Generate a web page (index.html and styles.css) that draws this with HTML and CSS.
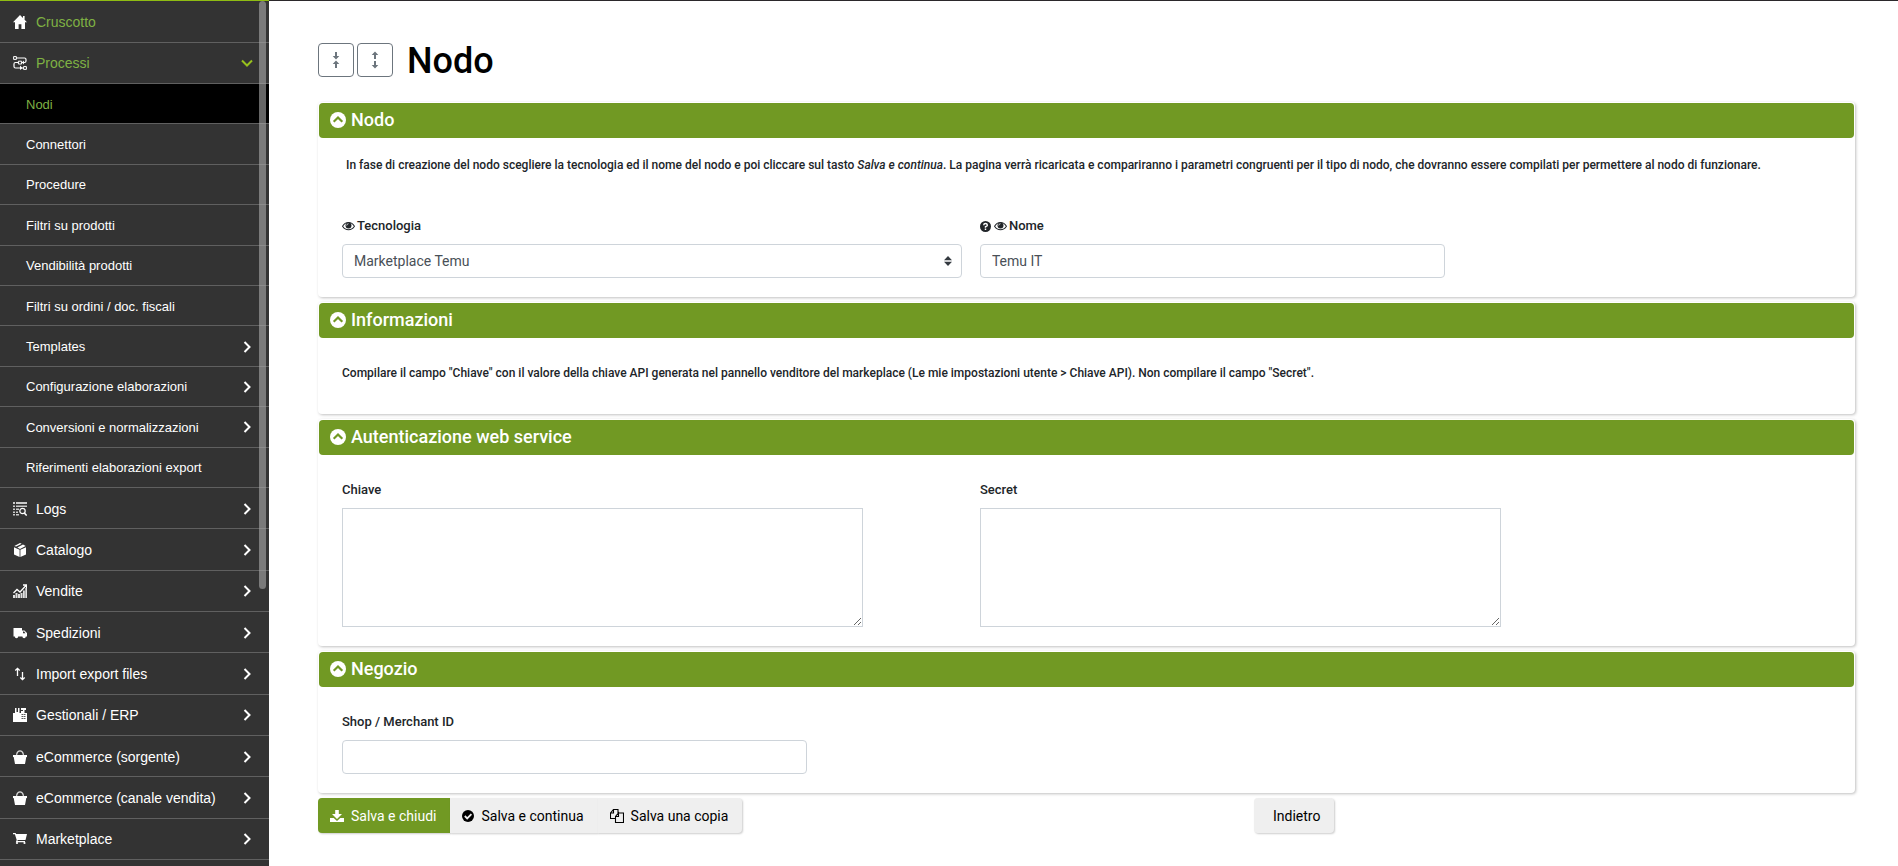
FILE: index.html
```html
<!doctype html>
<html lang="it">
  <head>
    <meta charset="UTF-8" />
    <meta name="viewport" content="width=device-width, initial-scale=1.0" />
    <title>Nodo</title>
    <link rel="stylesheet" href="styles.css">
  </head>
  <body>
    <svg class="sprite" aria-hidden="true">
      <symbol id="chevron" viewBox="0 0 12 12">
        <path d="M3.500 1 8.500 6l-5 5" fill="none" stroke="currentColor" stroke-width="2" />
      </symbol>
      <symbol id="home" viewBox="0 0 14 14">
        <path d="M7 0 0 7.200h2V14h3.600V9.200h2.800V14H12V7.200h2L11.600 4.700V1H10v2z" />
      </symbol>
      <symbol id="flow" viewBox="0 0 14 14">
        <path d="M3 2h8.500q1.500 0 1.500 1.500v1.500q0 1.500-1.500 1.500H2.500Q1 6.500 1 8v2.500Q1 12 2.500 12H11" fill="none" stroke="currentColor" stroke-width="1.200" />
        <path d="M.6.600h2.800v2.800H.6zM5.400 5.200h3.200V8H5.400zM10.600 10.600h2.800v2.800h-2.800z" fill="#333" stroke="currentColor" />
        <path d="M7 9.500 9.500 12 7 14zM11 4.500 9 6.500l2 2z" />
      </symbol>
      <symbol id="logs" viewBox="0 0 14 14">
        <path d="M0 0h2v2H0zM3 0h11v2H3zM0 3.500h2V5H0zM3 3.500h11V5H3zM0 6.500h2V8H0zM3 6.500h3V8H3zM0 9.500h2V11H0zM3 9.500h2V11H3zM0 12h2v1.500H0zM3 12h3v1.500H3z" opacity=".75" />
        <circle cx="9.500" cy="9" r="2.700" fill="none" stroke="currentColor" stroke-width="1.200" />
        <path d="m11.300 11 2.400 2.600" stroke="currentColor" stroke-width="1.500" />
      </symbol>
      <symbol id="box" viewBox="0 0 14 14">
        <path d="M1 4.300 6.600 6.800V14L1 11.400zM13 4.300 7.400 6.800V14L13 11.400zM7 0l1.700.800-5.500 2.700L1.300 3zM10 1.400l2.700 1.500L7 5.900 4.300 4.400z" />
      </symbol>
      <symbol id="sales" viewBox="0 0 14 14">
        <path d="M0 11h2v3H0zM2.500 9h2v5h-2zM5 10h2v4H5zM7.500 9h2v5h-2zM10 6.500h1.800V14H10zM12.300 4H14v10h-1.700z" opacity=".85" />
        <path d="m.5 9 3.500-3.500 3 2.500 6-6.500M10 1h3.500v3" fill="none" stroke="currentColor" stroke-width="1.300" />
      </symbol>
      <symbol id="truck" viewBox="0 0 14 14">
        <path d="M.5 2H9v2.500h2.500L14 7v3.500h-1.200a1.700 1.700 0 0 1-3.400 0H5.200a1.700 1.700 0 0 1-3.400 0H.5z" />
        <path d="M10 5.500h1.200l1.300 1.700H10z" fill="#333" />
      </symbol>
      <symbol id="updown" viewBox="0 0 14 14">
        <path d="M4.500 9V1.500M2.300 3.500l2.200-2.200 2.200 2.200M9.500 5v7.500M7.300 10.500l2.200 2.200 2.200-2.200" fill="none" stroke="currentColor" stroke-width="1.300" />
      </symbol>
      <symbol id="erp" viewBox="0 0 14 14">
        <path d="M0 5h2V0h1.500v4H5V0h1.500v5H8V3h2V2H8V0h5v2h-1.500v3H14v9H0z" />
        <path d="M8.500 6.500H13M8.500 8.500H13M8.500 10.500H13" stroke="#333" stroke-width=".8" stroke-dasharray="1.500 .5" />
      </symbol>
      <symbol id="bag" viewBox="0 0 14 14">
        <path d="M0 5h14v2h-.7L12 14H2L.7 7H0z" />
        <path d="M3.700 6V4Q4.500.800 7 .800T10.300 4v2" fill="none" stroke="currentColor" stroke-width="1.200" opacity=".8" />
      </symbol>
      <symbol id="cart" viewBox="0 0 14 14">
        <path d="M0 1h2.600l.5 1H14l-1.500 6H4.800l-.4 1H12v1.200H2.800L3.700 8 1.900 2.200H0z" />
        <circle cx="4" cy="11" r="1.100" /><circle cx="11.500" cy="11" r="1.100" />
      </symbol>
      <symbol id="eye" viewBox="0 0 14 10">
        <path d="M.6 5.200Q3 1.200 7 1.200t6.400 4Q11 9 7 9T.6 5.200z" fill="none" stroke="currentColor" stroke-width="1.100" />
        <circle cx="7" cy="4.500" r="3.200" />
        <path d="M5 4.500q.2-1.800 2-2" fill="none" stroke="#fff" stroke-width=".8" />
      </symbol>
      <symbol id="help" viewBox="0 0 12 12">
        <circle cx="6" cy="6" r="6" />
        <path d="M4 4.600Q4.200 2.800 6 2.800t2 1.700Q8 5.400 6 6.200v1.100M6 8.200v1.600" fill="none" stroke="#fff" stroke-width="1.600" />
      </symbol>
      <symbol id="circle-up" viewBox="0 0 16 16">
        <circle cx="8" cy="8" r="8" />
        <path d="M3.700 9.800 8 5.500l4.300 4.300" fill="none" stroke="#719923" stroke-width="2.200" />
      </symbol>
      <symbol id="save" viewBox="0 0 14 14">
        <path d="M5.200 1h3.600v4H12L7 10 2 5h3.200zM0 9h3.700L7 12l3.300-3H14v4H0z" />
      </symbol>
      <symbol id="check" viewBox="0 0 12 12">
        <circle cx="6" cy="6" r="6" />
        <path d="m2.800 6 2.400 2.400 4.200-4.200" fill="none" stroke="#efefef" stroke-width="1.800" />
      </symbol>
      <symbol id="copy" viewBox="0 0 14 14">
        <path d="M5.500 9.500h-5v-5.500l3-3.500h4.500v3.500M3.500.500v3.500h-3M8.500 4h5v9.500h-8v-6l3-3.500v3.500h-3" fill="none" stroke="currentColor" stroke-width="1.100" />
      </symbol>
      <symbol id="collapse" viewBox="0 0 8 18">
        <path d="M3 1h2v4h2.300L4 8.500.700 5H3zM3 17h2v-4h2.300L4 9.500.700 13H3z" />
      </symbol>
      <symbol id="expand" viewBox="0 0 8 18">
        <path d="M3 8h2V4h2.300L4 .500.700 4H3zM3 10h2v4h2.300L4 17.500.700 14H3z" />
      </symbol>
      <symbol id="sort" viewBox="0 0 8 10">
        <path d="M4 0l4 4.300H0zM4 10l4-4.300H0z" />
      </symbol>
    </svg>

    <div class="layout">
      <aside class="sidebar">
        <nav>
          <ul class="menu menu-top">
            <li><a class="active" href="#"><svg class="icon"><use href="#home" /></svg>Cruscotto</a></li>
            <li><a class="active" href="#"><svg class="icon"><use href="#flow" /></svg>Processi<svg class="arrow open"><use href="#chevron" /></svg></a></li>
          </ul>
          <ul class="menu submenu">
            <li><a class="current" href="#">Nodi</a></li>
            <li><a href="#">Connettori</a></li>
            <li><a href="#">Procedure</a></li>
            <li><a href="#">Filtri su prodotti</a></li>
            <li><a href="#">Vendibilità prodotti</a></li>
            <li><a href="#">Filtri su ordini / doc. fiscali</a></li>
            <li><a href="#">Templates<svg class="arrow"><use href="#chevron" /></svg></a></li>
            <li><a href="#">Configurazione elaborazioni<svg class="arrow"><use href="#chevron" /></svg></a></li>
            <li><a href="#">Conversioni e normalizzazioni<svg class="arrow"><use href="#chevron" /></svg></a></li>
            <li><a href="#">Riferimenti elaborazioni export</a></li>
          </ul>
          <ul class="menu menu-areas">
            <li><a href="#"><svg class="icon"><use href="#logs" /></svg>Logs<svg class="arrow"><use href="#chevron" /></svg></a></li>
            <li><a href="#"><svg class="icon"><use href="#box" /></svg>Catalogo<svg class="arrow"><use href="#chevron" /></svg></a></li>
            <li><a href="#"><svg class="icon"><use href="#sales" /></svg>Vendite<svg class="arrow"><use href="#chevron" /></svg></a></li>
            <li><a href="#"><svg class="icon"><use href="#truck" /></svg>Spedizioni<svg class="arrow"><use href="#chevron" /></svg></a></li>
            <li><a href="#"><svg class="icon"><use href="#updown" /></svg>Import export files<svg class="arrow"><use href="#chevron" /></svg></a></li>
            <li><a href="#"><svg class="icon"><use href="#erp" /></svg>Gestionali / ERP<svg class="arrow"><use href="#chevron" /></svg></a></li>
            <li><a href="#"><svg class="icon"><use href="#bag" /></svg>eCommerce (sorgente)<svg class="arrow"><use href="#chevron" /></svg></a></li>
            <li><a href="#"><svg class="icon"><use href="#bag" /></svg>eCommerce (canale vendita)<svg class="arrow"><use href="#chevron" /></svg></a></li>
            <li><a href="#"><svg class="icon"><use href="#cart" /></svg>Marketplace<svg class="arrow"><use href="#chevron" /></svg></a></li>
          </ul>
        </nav>
        <div class="scrollbar"></div>
      </aside>

      <main class="content">
        <header class="page-header">
          <button type="button" class="btn-outline" aria-label="Comprimi"><svg><use href="#collapse" /></svg></button>
          <button type="button" class="btn-outline" aria-label="Espandi"><svg><use href="#expand" /></svg></button>
          <h1>Nodo</h1>
        </header>

        <form>
          <section class="card">
            <h2><svg><use href="#circle-up" /></svg>Nodo</h2>
            <div class="card-body">
              <p class="intro">In fase di creazione del nodo scegliere la tecnologia ed il nome del nodo e poi cliccare sul tasto <em>Salva e continua</em>. La pagina verrà ricaricata e compariranno i parametri congruenti per il tipo di nodo, che dovranno essere compilati per permettere al nodo di funzionare.</p>
              <div class="row">
                <div class="field">
                  <label for="tecnologia"><svg class="eye"><use href="#eye" /></svg>Tecnologia</label>
                  <div class="select">
                    <select id="tecnologia"><option>Marketplace Temu</option></select>
                    <svg><use href="#sort" /></svg>
                  </div>
                </div>
                <div class="field">
                  <label for="nome"><svg class="help"><use href="#help" /></svg><svg class="eye"><use href="#eye" /></svg>Nome</label>
                  <input type="text" id="nome" value="Temu IT">
                </div>
              </div>
            </div>
          </section>

          <section class="card">
            <h2><svg><use href="#circle-up" /></svg>Informazioni</h2>
            <div class="card-body">
              <p class="info">Compilare il campo "Chiave" con il valore della chiave API generata nel pannello venditore del markeplace (Le mie impostazioni utente &gt; Chiave API). Non compilare il campo "Secret".</p>
            </div>
          </section>

          <section class="card">
            <h2><svg><use href="#circle-up" /></svg>Autenticazione web service</h2>
            <div class="card-body">
              <div class="row">
                <div class="field">
                  <label for="chiave">Chiave</label>
                  <textarea id="chiave"></textarea>
                </div>
                <div class="field">
                  <label for="secret">Secret</label>
                  <textarea id="secret"></textarea>
                </div>
              </div>
            </div>
          </section>

          <section class="card">
            <h2><svg><use href="#circle-up" /></svg>Negozio</h2>
            <div class="card-body">
              <div class="row">
                <div class="field">
                  <label for="shop">Shop / Merchant ID</label>
                  <input type="text" id="shop">
                </div>
              </div>
            </div>
          </section>

          <div class="actions">
            <div class="btn-group">
              <button type="submit" class="btn btn-primary"><svg><use href="#save" /></svg>Salva e chiudi</button>
              <button type="submit" class="btn"><svg class="small"><use href="#check" /></svg>Salva e continua</button>
              <button type="submit" class="btn"><svg><use href="#copy" /></svg>Salva una copia</button>
            </div>
            <button type="button" class="btn btn-back">Indietro</button>
          </div>
        </form>
      </main>
    </div>
  </body>
</html>
```
FILE: styles.css
```css
* {
  box-sizing: border-box;
  margin: 0;
  padding: 0;
}
body {
  font-family: Roboto, sans-serif;
  font-size: 13px;
  color: #212529;
  background: #fff;
}
svg {
  fill: currentColor;
  flex-shrink: 0;
}
.sprite {
  display: none;
}
.layout {
  display: flex;
  height: 100vh;
  overflow: hidden;
}

/* Sidebar */
.sidebar {
  position: relative;
  width: 269px;
  flex-shrink: 0;
  background: #333;
  border-top: 1px solid #8fbc13;
  font-family: "Liberation Sans", Arial, sans-serif;
}
.menu {
  display: grid;
  grid-auto-rows: 1fr;
  list-style: none;
}
.menu-top {
  min-height: 83px;
}
.submenu {
  min-height: 404px;
}
.menu-areas {
  min-height: 372px;
}
.menu li {
  display: flex;
  border-bottom: 1px solid #606060;
}
.menu a {
  display: flex;
  align-items: center;
  flex: 1;
  padding: 1px 16px 0 13px;
  color: #fff;
  font-size: 14px;
  text-decoration: none;
}
.submenu a {
  padding-left: 26px;
  font-size: 13px;
}
.menu a.active,
.menu a.current {
  color: #7fb143;
}
.menu a.current {
  background: #000;
}
.icon {
  width: 14px;
  height: 14px;
  margin-right: 9px;
  color: #fff;
}
.arrow {
  width: 12px;
  height: 12px;
  margin-left: auto;
}
.arrow.open {
  color: #98c11d;
  transform: rotate(90deg);
}
.scrollbar {
  position: absolute;
  top: 0;
  right: 3px;
  width: 7px;
  height: 68%;
  border-radius: 4px;
  background: rgba(170, 170, 170, 0.6);
}

/* Content */
.content {
  flex: 1;
  padding: 42px 43px 0 49px;
  border-top: 1px solid #2b282b;
}
.page-header {
  display: flex;
  align-items: center;
  gap: 3px;
  height: 34px;
  margin-bottom: 25px;
}
.page-header h1 {
  margin-left: 11px;
  padding-top: 2px;
  color: #000;
  font-size: 36px;
  font-weight: 500;
}
.btn-outline {
  width: 36px;
  height: 34px;
  border: 1px solid #6c757d;
  border-radius: 4px;
  background: #fff;
  color: #6c757d;
}
.btn-outline svg {
  display: block;
  width: 8px;
  height: 18px;
  margin: 0 auto;
}
.card {
  margin-bottom: 5px;
  padding: 1px 1px 19px;
  border-radius: 4px;
  box-shadow: 1px 1px 3px rgba(0, 0, 0, 0.25);
}
.card h2 {
  display: flex;
  align-items: center;
  height: 35px;
  padding: 0 11px 2px;
  border-radius: 4px;
  background: #719923;
  color: #fff;
  font-size: 18px;
  font-weight: 500;
}
.card h2 svg {
  width: 16px;
  height: 16px;
  margin-right: 5px;
}
.card-body {
  padding: 25px 36px 0 23px;
  font-weight: 500;
}
.card p,
.card label {
  line-height: 20px;
}
.card p {
  font-size: 12px;
}
.card .intro {
  margin: -8px -34px 41px 4px;
}
.card .info {
  margin-bottom: 12px;
}
.row {
  display: flex;
  gap: 18px;
}
.field {
  width: 42%;
}
.field label {
  display: flex;
  align-items: center;
  margin-bottom: 8px;
}
.eye {
  width: 13px;
  height: 10px;
  margin-right: 2px;
}
.help {
  width: 11px;
  height: 11px;
  margin-right: 3px;
}
.select {
  position: relative;
}
.select svg {
  position: absolute;
  top: 12px;
  right: 10px;
  width: 8px;
  height: 10px;
  color: #343a40;
  pointer-events: none;
}
select,
input,
textarea {
  display: block;
  border: 1px solid #ced4da;
  border-radius: 4px;
  background: #fff;
  color: #495057;
  font-family: inherit;
  font-size: 14px;
}
select,
input {
  width: 75%;
  height: 34px;
  padding: 0 11px;
}
select {
  width: 100%;
  appearance: none;
}
textarea {
  width: 84%;
  height: 119px;
  border-radius: 0;
}

/* Actions */
.actions {
  display: flex;
}
.btn-group {
  display: flex;
  width: 936px;
}
.btn {
  display: flex;
  align-items: center;
  height: 35px;
  padding: 0 14px 0 12px;
  border: 0;
  background: #efefef;
  color: #000;
  font-family: inherit;
  font-size: 14px;
  box-shadow: 1px 1px 2px rgba(0, 0, 0, 0.2);
}
.btn svg {
  width: 14px;
  height: 14px;
  margin-right: 7px;
}
.btn svg.small {
  width: 12px;
  height: 12px;
}
.btn:first-child {
  border-radius: 4px 0 0 4px;
}
.btn:last-child {
  border-radius: 0 4px 4px 0;
}
.btn-primary {
  background: #719923;
  color: #fff;
}
.actions .btn-back {
  padding: 0 14px 0 19px;
  border-radius: 4px;
}
```
